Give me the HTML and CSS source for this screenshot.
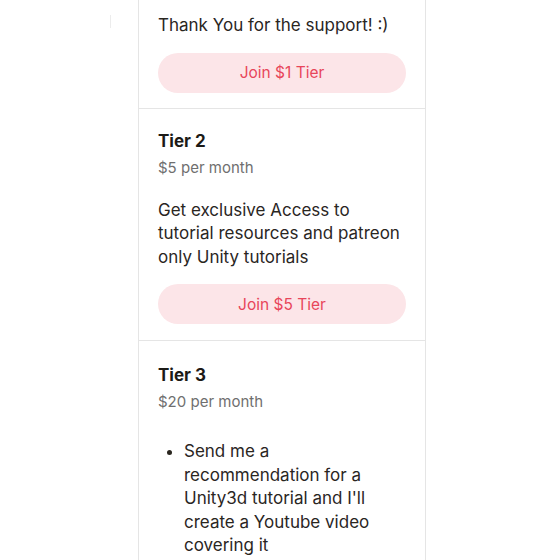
FILE: index.html
```html
<!DOCTYPE html>
<html lang="en">
<head>
<meta charset="utf-8">
<title>Tiers</title>
<link rel="stylesheet" href="styles.css">
</head>
<body>
<div class="mark"></div>
<div class="panel">
  <section class="tier tier-first">
    <p class="desc">Thank You for the support! :)</p>
    <button class="join">Join $1 Tier</button>
  </section>
  <section class="tier">
    <h2 class="name">Tier 2</h2>
    <div class="price">$5 per month</div>
    <p class="desc">Get exclusive Access to tutorial resources and patreon only Unity tutorials</p>
    <button class="join">Join $5 Tier</button>
  </section>
  <section class="tier tier-last">
    <h2 class="name">Tier 3</h2>
    <div class="price">$20 per month</div>
    <ul class="perks">
      <li>Send me a recommendation for a Unity3d tutorial and I'll create a Youtube video covering it</li>
    </ul>
  </section>
</div>
</body>
</html>
```
FILE: styles.css
```css
html, body {
  margin: 0;
  padding: 0;
  background: #ffffff;
  height: 560px;
  overflow: hidden;
}
body {
  font-family: Inter, "Liberation Sans", Arial, sans-serif;
  color: #241e12;
  position: relative;
}
.mark {
  position: absolute;
  left: 110px;
  top: 15px;
  width: 1px;
  height: 13px;
  background: #ececec;
}
.panel {
  margin-left: 138px;
  width: 286px;
  border-left: 1px solid #e5e5e5;
  border-right: 1px solid #e5e5e5;
  min-height: 560px;
}
.tier {
  padding: 20px 19px 16px 19px;
  border-bottom: 1px solid #e5e5e5;
  display: flex;
  flex-direction: column;
}
.tier-first {
  padding-top: 14px;
  padding-bottom: 15px;
}
.tier-last {
  padding-top: 22px;
}
.name {
  margin: 0;
  font-size: 17px;
  font-weight: 700;
  line-height: 24px;
  color: #1c1a16;
}
.price {
  margin-top: 4px;
  font-size: 15px;
  line-height: 22px;
  color: #6f6f6f;
}
.desc {
  margin: 0;
  font-size: 17px;
  line-height: 23.5px;
  color: #2a261f;
}
.tier .price + .desc {
  margin-top: 20px;
}
.join {
  margin-top: 15px;
  height: 40px;
  border: none;
  border-radius: 20px;
  background: #fce5e8;
  color: #e8455a;
  font-family: inherit;
  font-size: 15.5px;
  cursor: pointer;
}
.perks {
  margin: 27px 0 0 0;
  padding-left: 26px;
  font-size: 17px;
  line-height: 23.5px;
  color: #2a261f;
}
```
